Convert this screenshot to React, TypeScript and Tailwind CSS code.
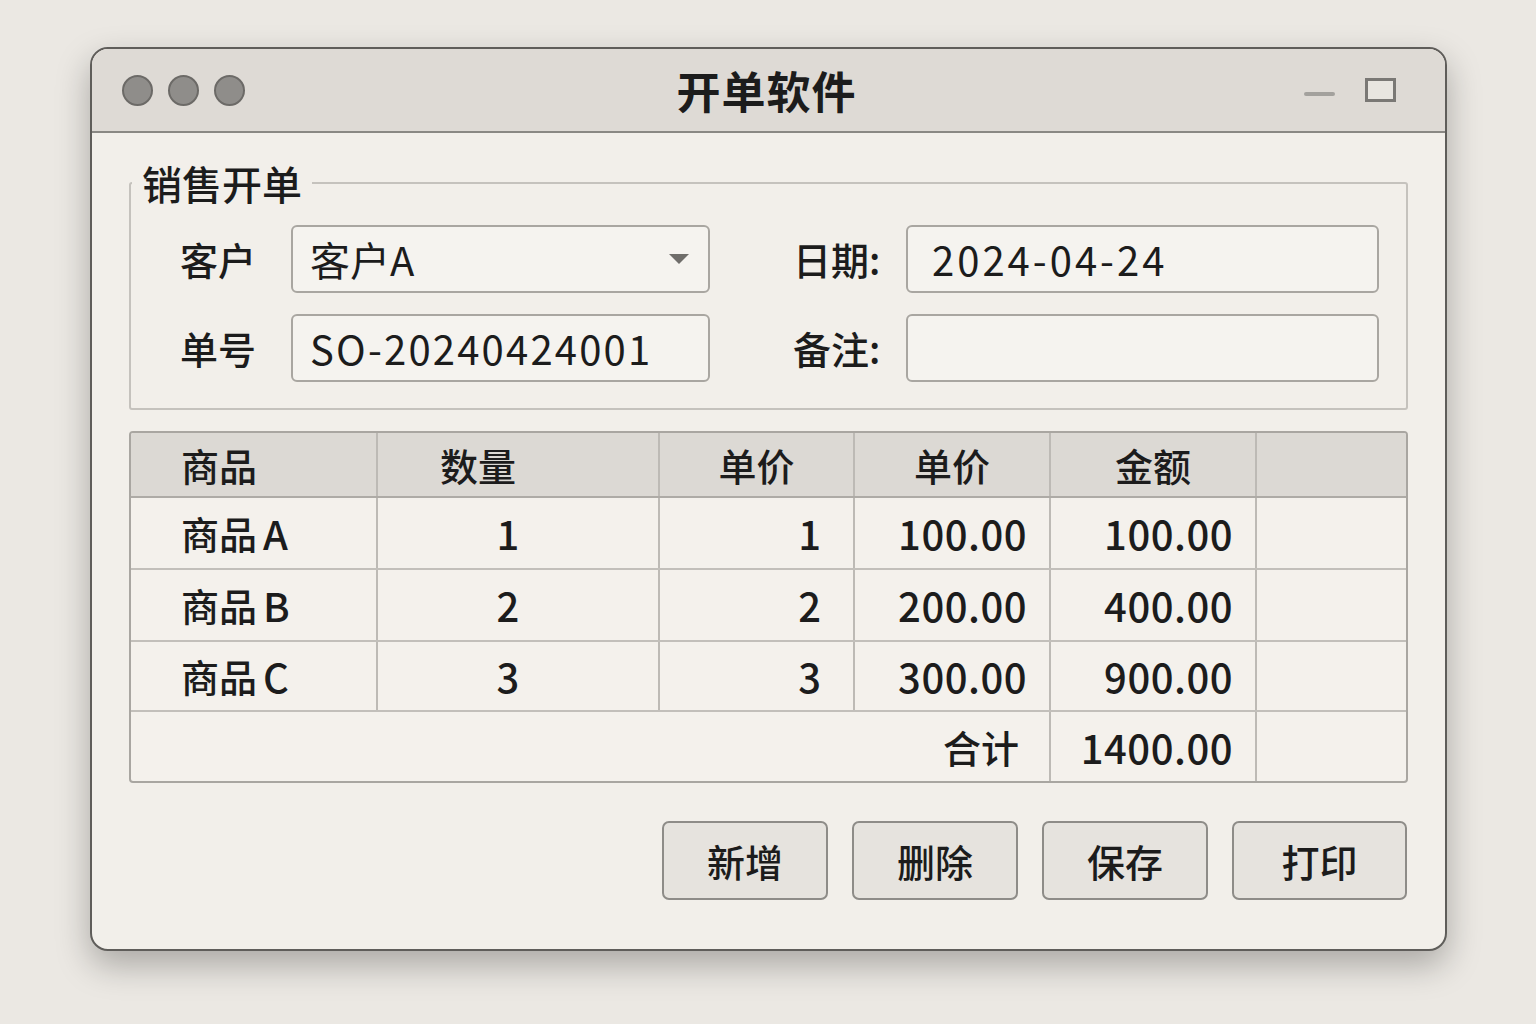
import React from 'react';

const font = { fontFamily: '"Noto Sans CJK SC", "Noto Sans", sans-serif' };

const rows = [
  { name: '商品', tag: 'A', qty: '1', unit: '1', price: '100.00', amount: '100.00', h: 'h-[72px]' },
  { name: '商品', tag: 'B', qty: '2', unit: '2', price: '200.00', amount: '400.00', h: 'h-[72px]' },
  { name: '商品', tag: 'C', qty: '3', unit: '3', price: '300.00', amount: '900.00', h: 'h-[70px]' },
];

function Field({ label, value, wide, dropdown }: { label: string; value?: string; wide?: boolean; dropdown?: boolean }) {
  return (
    <div className={wide ? 'flex items-center flex-1' : 'flex items-center'}>
      <div className={wide ? 'w-[113px] text-[38px] font-medium leading-none' : 'w-[111px] text-[38px] font-medium leading-none'}>
        {label}
      </div>
      <div
        className={
          (wide ? 'flex-1' : 'w-[419px]') +
          ' h-[68px] rounded-[6px] border-2 border-[#a9a6a1] bg-[#f5f3ef] flex items-center justify-between pl-[17px] pr-[18px]'
        }
      >
        <span
          className={
            wide
              ? 'text-[40px] leading-none pl-[7px] tracking-[3px]'
              : dropdown
                ? 'text-[40px] leading-none'
                : 'text-[40px] leading-none tracking-[2.2px]'
          }
        >
          {value}
        </span>
        {dropdown && (
          <svg width="22" height="12" viewBox="0 0 22 12">
            <path d="M1 1 H21 L11 11 Z" fill="#6f6d6a" />
          </svg>
        )}
      </div>
    </div>
  );
}

export default function App() {
  const cell = 'flex items-center h-full border-[#bdbab5]';
  return (
    <div className="min-h-screen w-full bg-[#ebe8e3] pt-[47px] pl-[90px] text-[#1c1c1c]" style={font}>
      <div className="w-[1357px] h-[904px] rounded-[18px] border-2 border-[#5f5d5a] bg-[#f2efea] overflow-hidden shadow-[0_14px_34px_rgba(0,0,0,0.28)] flex flex-col">
        {/* title bar */}
        <div className="h-[84px] shrink-0 bg-[#dedad5] border-b-2 border-[#8a8884] flex items-center px-[30px]">
          <div className="flex gap-[15px] w-[300px]">
            <span className="w-[31px] h-[31px] rounded-full bg-[#8f8d8a] border-2 border-[#6c6a67]" />
            <span className="w-[31px] h-[31px] rounded-full bg-[#8f8d8a] border-2 border-[#6c6a67]" />
            <span className="w-[31px] h-[31px] rounded-full bg-[#8f8d8a] border-2 border-[#6c6a67]" />
          </div>
          <div className="flex-1 text-center text-[44px] font-bold leading-none tracking-[1px] pr-[4px]">开单软件</div>
          <div className="w-[300px] flex justify-end items-center gap-[30px] pr-[19px]">
            <span className="w-[31px] h-[4px] rounded-full bg-[#a3a19d] mt-[8px]" />
            <span className="w-[31px] h-[24px] border-[3px] border-[#7a7875] bg-[#e8e5e0]" />
          </div>
        </div>

        {/* body */}
        <div className="flex-1 px-[37px]">
          <fieldset className="mt-[30px] border-2 border-[#c5c2bd] rounded-[3px] pb-[26px]">
            <legend className="ml-[1px] px-[10px] text-[40px] font-medium leading-[40px]">销售开单</legend>
            <div className="mt-[22px] pl-[49px] pr-[27px] flex flex-col gap-[21px]">
              <div className="flex items-center">
                <Field label="客户" value="客户A" dropdown />
                <div className="w-[83px]" />
                <Field label="日期:" value="2024-04-24" wide />
              </div>
              <div className="flex items-center">
                <Field label="单号" value="SO-20240424001" />
                <div className="w-[83px]" />
                <Field label="备注:" wide />
              </div>
            </div>
          </fieldset>

          {/* table */}
          <div className="mt-[21px] border-2 border-[#a9a6a1] rounded-[4px] overflow-hidden bg-[#f4f1ec] text-[38px] font-medium leading-none">
            <div className="grid grid-cols-[247px_282px_195px_196px_206px_1fr] h-[65px] bg-[#dcd9d4] border-b-2 border-[#aeaba6]">
              <div className={cell + ' border-r-2 pl-[50px]'}>商品</div>
              <div className={cell + ' border-r-2 pl-[62px]'}>数量</div>
              <div className={cell + ' border-r-2 justify-center'}>单价</div>
              <div className={cell + ' border-r-2 justify-center'}>单价</div>
              <div className={cell + ' border-r-2 justify-center'}>金额</div>
              <div className={cell} />
            </div>
            {rows.map((r) => (
              <div
                key={r.tag}
                className={'grid grid-cols-[247px_282px_195px_196px_206px_1fr] border-b-2 border-[#c2bfba] text-[40px] ' + r.h}
              >
                <div className={cell + ' border-r-2 pl-[50px] text-[38px]'}>
                  {r.name}
                  <span className="ml-[6px] text-[40px]">{r.tag}</span>
                </div>
                <div className={cell + ' border-r-2 justify-center pr-[20px]'}>{r.qty}</div>
                <div className={cell + ' border-r-2 justify-end pr-[32px]'}>{r.unit}</div>
                <div className={cell + ' border-r-2 justify-end pr-[22px] tracking-[0.5px]'}>{r.price}</div>
                <div className={cell + ' border-r-2 justify-end pr-[22px] tracking-[0.5px]'}>{r.amount}</div>
                <div className={cell} />
              </div>
            ))}
            <div className="grid grid-cols-[247px_282px_195px_196px_206px_1fr] h-[69px] text-[40px]">
              <div className={cell + ' col-span-4 border-r-2 justify-end pr-[30px] text-[38px]'}>合计</div>
              <div className={cell + ' border-r-2 justify-end pr-[22px] tracking-[0.5px]'}>1400.00</div>
              <div className={cell} />
            </div>
          </div>

          {/* buttons */}
          <div className="mt-[38px] flex justify-end gap-[24px] pr-[1px]">
            {['新增', '删除', '保存', '打印'].map((b, i) => (
              <button
                key={b}
                className={
                  (i === 3 ? 'w-[175px]' : 'w-[166px]') +
                  ' h-[79px] rounded-[7px] border-2 border-[#8e8c88] bg-[#e6e3de] text-[38px] font-medium leading-none'
                }
              >
                {b}
              </button>
            ))}
          </div>
        </div>
      </div>
    </div>
  );
}
